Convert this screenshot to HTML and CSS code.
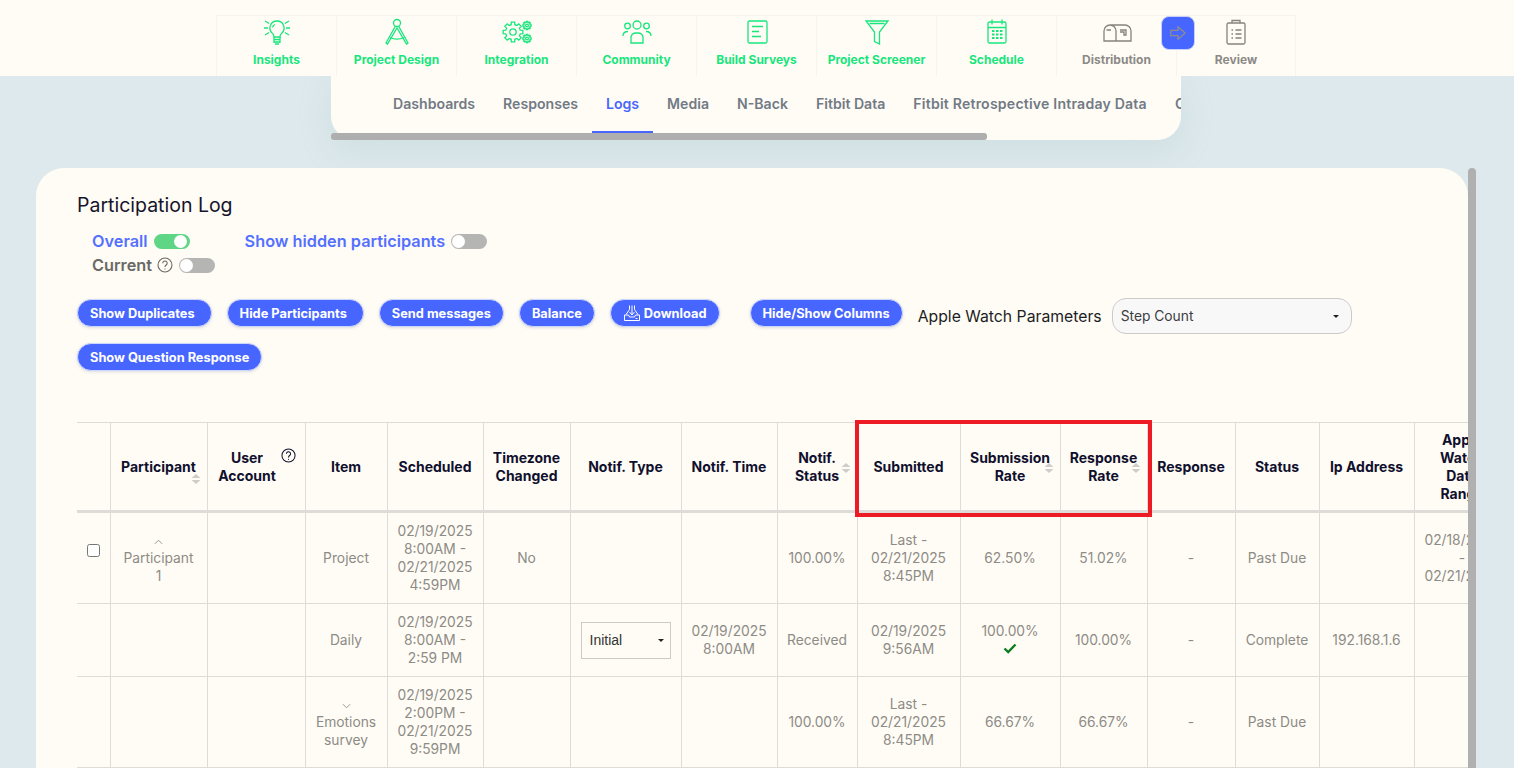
FILE: index.html
```html
<!DOCTYPE html>
<html lang="en">
<head>
<meta charset="utf-8">
<title>Participation Log</title>
<link rel="stylesheet" href="styles.css">
</head>
<body>
<header class="topbar">
  <nav class="steps">
    <a class="step done"><svg viewBox="0 0 32 32"><path d="M16 5a7 7 0 0 0-4.500 12.400c1 1 1.500 2 1.500 3.600h6c0-1.600.5-2.600 1.500-3.600A7 7 0 0 0 16 5z"/><path d="M13 23.500h6M13 26h6M14 28h4M13 21v6M19 21v6M14 8.500a4 4 0 0 0-2.500 3M3 12h4M25 12h4M4 5l4 2.500M28 5l-4 2.500M4 19l4-2.500M28 19l-4-2.500"/></svg><span>Insights</span></a>
    <a class="step done"><svg viewBox="0 0 32 32"><circle cx="16" cy="7" r="3.500"/><path d="M14.500 10 5 27l1.500 1 9.500-16 9.500 16 1.500-1-9.500-17M9 21.500c4 2 10 2 14 0"/></svg><span>Project Design</span></a>
    <a class="step done"><svg viewBox="0 0 32 32"><defs><path id="gear" d="M7.280-1.810 9.850-1.740 9.850 1.740 7.280 1.810 6.430 3.860 8.190 5.740 5.740 8.190 3.860 6.430 1.810 7.280 1.740 9.850-1.740 9.850-1.810 7.280-3.860 6.430-5.740 8.190-8.190 5.740-6.430 3.860-7.280 1.810-9.850 1.740-9.850-1.740-7.280-1.810-6.430-3.860-8.190-5.740-5.740-8.190-3.860-6.430-1.810-7.280-1.740-9.850 1.740-9.850 1.810-7.280 3.860-6.430 5.740-8.190 8.190-5.740 6.430-3.860z"/></defs><use href="#gear" transform="translate(12 16)"/><circle cx="12" cy="16" r="3.200"/><use href="#gear" class="thin" transform="translate(26 9.500) scale(.42)"/><circle cx="26" cy="9.500" r="1.400"/><use href="#gear" class="thin" transform="translate(26 22.500) scale(.42)"/><circle cx="26" cy="22.500" r="1.400"/></svg><span>Integration</span></a>
    <a class="step done"><svg viewBox="0 0 32 32"><circle cx="16" cy="9" r="4"/><circle cx="6.500" cy="10" r="2.800"/><circle cx="25.500" cy="10" r="2.800"/><path d="M10 27v-6a5 5 0 0 1 5-4h2a5 5 0 0 1 5 4v6zM2 20c0-3 2-4.500 5-4.500M30 20c0-3-2-4.500-5-4.500"/></svg><span>Community</span></a>
    <a class="step done"><svg viewBox="0 0 32 32"><rect x="7" y="5" width="19" height="22" rx="1.500"/><path d="M11 10.500h11M11 15.500h7M11 20.500h9"/></svg><span>Build Surveys</span></a>
    <a class="step done"><svg viewBox="0 0 32 32"><path d="M5 5h22L18.500 16v12l-5-2.500V16zM8.500 7.500h15"/></svg><span>Project Screener</span></a>
    <a class="step done"><svg viewBox="0 0 32 32"><rect x="7" y="6" width="18" height="21" rx="1.500"/><path d="M7 11.500h18M11 3.500v5M21 3.500v5"/><path class="dots" d="M11 15h2.500M15 15h2.500M19 15h2.500M11 18.500h2.500M15 18.500h2.500M19 18.500h2.500M11 22h2.500M15 22h2.500M19 22h2.500"/></svg><span>Schedule</span></a>
    <a class="step todo"><svg viewBox="0 0 32 32"><path d="M9 9h15a6 6 0 0 1 6 6v10H3V15a6 6 0 0 1 6-6zM9 9a6 6 0 0 1 6 6v10M5.500 14H10M19 14h6v5h-2v-3h-4"/></svg><span>Distribution</span></a>
    <a class="step todo"><svg viewBox="0 0 32 32"><rect x="7" y="7" width="18" height="21" rx="1.500"/><path d="M12 7V4.500h8V7M11.500 14h1.500M15.500 14h6M11.500 18h1.500M15.500 18h6M11.500 22h1.500M15.500 22h6"/></svg><span>Review</span></a>
    <button class="next" aria-label="Next"><svg viewBox="0 0 20 20"><path d="M2 7h8V3l8 7-8 7v-4H2z"/></svg></button>
  </nav>
</header>

<section class="tabs">
  <div class="tabs-track">
    <a class="tab">Dashboards</a>
    <a class="tab">Responses</a>
    <a class="tab active">Logs</a>
    <a class="tab">Media</a>
    <a class="tab">N-Back</a>
    <a class="tab">Fitbit Data</a>
    <a class="tab long">Fitbit Retrospective Intraday Data</a>
    <a class="tab">Custom</a>
  </div>
  <div class="tabs-scroll"></div>
</section>

<main class="card">
  <div class="card-body">
    <h1 class="title">Participation Log</h1>
    <div class="filters">
      <div class="filter-row">
        <span class="flabel blue">Overall</span><span class="switch on"></span>
        <span class="flabel blue second">Show hidden participants</span><span class="switch"></span>
      </div>
      <div class="filter-row">
        <span class="flabel grey">Current</span>
        <svg class="help grey-help" viewBox="0 0 16 16"><circle cx="8" cy="8" r="7"/><path d="M5.800 6.200a2.200 2.200 0 1 1 3.400 1.800c-.8.500-1.200 1-1.200 2"/><path d="M8 11.600v1"/></svg>
        <span class="switch"></span>
      </div>
    </div>

    <div class="toolbar">
      <button class="btn roomy">Show Duplicates</button>
      <button class="btn roomy">Hide Participants</button>
      <button class="btn">Send messages</button>
      <button class="btn">Balance</button>
      <button class="btn"><svg class="dl" viewBox="0 0 18 18"><path d="M9 1.500v9M6.500 8 9 11l2.500-3M6.500 1.500v4L3 10.500M11.500 1.500v4l3.500 5M1.500 11h4l1 2h5l1-2h4v5.500h-15zM12.500 14.500h2"/></svg>Download</button>
      <button class="btn push">Hide/Show Columns</button>
      <label class="param">Apple Watch Parameters
        <span class="param-select"><select><option>Step Count</option></select></span>
      </label>
      <button class="btn">Show Question Response</button>
    </div>

    <div class="table-wrap">
      <table class="log">
        <colgroup>
          <col class="c33"><col class="c97"><col class="c98"><col class="c82"><col class="c96"><col class="c87"><col class="c111"><col class="c96"><col class="c80"><col class="c103"><col class="c100"><col class="c87"><col class="c88"><col class="c84"><col class="c95"><col class="c96">
        </colgroup>
        <thead>
          <tr>
            <th></th>
            <th>Participant<i class="sort low"></i></th>
            <th class="has-help">User Account<svg class="help head-help" viewBox="0 0 16 16"><circle cx="8" cy="8" r="7"/><path d="M5.800 6.200a2.200 2.200 0 1 1 3.400 1.800c-.8.500-1.200 1-1.200 2"/><path d="M8 11.600v1"/></svg></th>
            <th>Item</th>
            <th>Scheduled</th>
            <th>Timezone Changed</th>
            <th>Notif. Type</th>
            <th>Notif. Time</th>
            <th>Notif. Status<i class="sort"></i></th>
            <th>Submitted</th>
            <th>Submission Rate<i class="sort"></i></th>
            <th>Response Rate<i class="sort"></i></th>
            <th>Response</th>
            <th>Status</th>
            <th>Ip Address</th>
            <th>Apple<br>Watch<br>Data<br>Range</th>
          </tr>
        </thead>
        <tbody>
          <tr>
            <td><input type="checkbox" class="check"></td>
            <td><svg class="chev" viewBox="0 0 10 6"><path d="M1 5l4-4 4 4"/></svg><br>Participant<br>1</td>
            <td></td>
            <td>Project</td>
            <td>02/19/2025 8:00AM - 02/21/2025 4:59PM</td>
            <td>No</td>
            <td></td>
            <td></td>
            <td>100.00%</td>
            <td>Last -<br>02/21/2025 8:45PM</td>
            <td>62.50%</td>
            <td>51.02%</td>
            <td>-</td>
            <td>Past Due</td>
            <td></td>
            <td>02/18/2025<br>-<br>02/21/2025</td>
          </tr>
          <tr>
            <td></td><td></td><td></td>
            <td>Daily</td>
            <td>02/19/2025 8:00AM - 2:59 PM</td>
            <td></td>
            <td><span class="cell-select"><select><option>Initial</option></select></span></td>
            <td>02/19/2025 8:00AM</td>
            <td>Received</td>
            <td>02/19/2025 9:56AM</td>
            <td>100.00%<br><svg class="tick" viewBox="0 0 14 11"><path d="M1.500 5.500 5.200 9 12.500 1.500"/></svg></td>
            <td>100.00%</td>
            <td>-</td>
            <td>Complete</td>
            <td>192.168.1.6</td>
            <td></td>
          </tr>
          <tr>
            <td></td><td></td><td></td>
            <td><svg class="chev" viewBox="0 0 10 6"><path d="M1 1l4 4 4-4"/></svg><br>Emotions survey</td>
            <td>02/19/2025 2:00PM - 02/21/2025 9:59PM</td>
            <td></td><td></td><td></td>
            <td>100.00%</td>
            <td>Last -<br>02/21/2025 8:45PM</td>
            <td>66.67%</td>
            <td>66.67%</td>
            <td>-</td>
            <td>Past Due</td>
            <td></td><td></td>
          </tr>
        </tbody>
      </table>
      <div class="highlight"></div>
    </div>
  </div>
  <div class="card-scroll"></div>
</main>
</body>
</html>
```
FILE: styles.css
```css
* { box-sizing: border-box; }
html, body { height: 100%; }
body {
  margin: 0;
  height: 768px;
  overflow: hidden;
  background: #dde9ec;
  font-family: "Inter", "Liberation Sans", sans-serif;
  color: #8d8b86;
}

/* top step bar */
.topbar {
  height: 76px;
  padding-top: 15px;
  background: #fffcf5;
  display: flex;
  justify-content: center;
  position: relative;
  z-index: 2;
}
.steps { display: flex; position: relative; margin-left: -2px; }
.step {
  width: 120px;
  height: 61px;
  border-left: 1px solid #f6f4ee;
  border-top: 1px solid #f6f4ee;
  display: flex;
  flex-direction: column;
  align-items: center;
  font-size: 12px;
  font-weight: 700;
  line-height: 14px;
}
.step:nth-child(9) { border-right: 1px solid #f6f4ee; }
.step svg { width: 32px; height: 32px; margin-bottom: 5px; fill: none; stroke-width: 1.300; }
.step.done { color: #17e67c; }
.step.done svg { stroke: #17e67c; }
.step.todo { color: #8c8a87; }
.step.todo svg { stroke: #85837f; }
.step .dots { stroke-width: 2; }
.step .thin { stroke-width: 3; }
.next {
  position: absolute;
  left: 945px;
  top: 1px;
  width: 34px;
  height: 34px;
  padding: 7px;
  border: 1px solid #c8d2f8;
  border-radius: 8px;
  background: #4766ff;
}
.next svg { display: block; width: 18px; height: 18px; fill: none; stroke: #948f86; stroke-width: 1.300; }

/* secondary tabs */
.tabs {
  position: relative;
  width: 850px;
  height: 64px;
  margin-left: 331px;
  border-radius: 0 0 24px 24px;
  box-shadow: 0 12px 30px rgba(170, 195, 200, .25);
}
.tabs-track {
  display: flex;
  height: 64px;
  padding-left: 48px;
  overflow: hidden;
  white-space: nowrap;
  background: #fffcf5;
  border-radius: 0 0 24px 24px;
}
.tab {
  flex: none;
  padding: 0 14px;
  height: 57px;
  line-height: 56px;
  font-size: 14.100px;
  font-weight: 600;
  color: #727a85;
}
.tab.long { letter-spacing: .2px; }
.tab.active { color: #4766ff; border-bottom: 2px solid #4766ff; }
.tabs-scroll {
  position: absolute;
  left: 0;
  bottom: 0;
  width: 656px;
  height: 7px;
  background: #aeaeae;
  border-radius: 3px;
}

/* card */
.card {
  position: relative;
  width: 1440px;
  height: 620px;
  margin: 28px 0 0 36px;
}
.card-body {
  width: 1432px;
  height: 620px;
  padding: 26px 0 0 41px;
  background: #fffcf5;
  border-radius: 28px 28px 0 0;
  overflow: hidden;
}
.card-scroll {
  position: absolute;
  right: 0;
  top: 0;
  bottom: 0;
  width: 8px;
  background: #b0b0b0;
  border-radius: 4px 4px 0 0;
}
.title { margin: 0; font-size: 19.500px; line-height: 22px; font-weight: 400; color: #14142b; }

.filters { margin: 13px 0 0 15px; }
.filter-row { display: flex; align-items: center; height: 24px; font-size: 16.300px; font-weight: 600; }
.flabel.blue { color: #5470ff; }
.flabel.grey { color: #6b6966; }
.flabel.second { margin-left: 55px; }
.switch {
  position: relative;
  width: 36px;
  height: 15px;
  margin-left: 6px;
  border-radius: 8px;
  background: #b5b5b3;
}
.switch::after {
  content: "";
  position: absolute;
  left: 1px;
  top: 1px;
  width: 13px;
  height: 13px;
  border-radius: 50%;
  background: #fff;
}
.switch.on { background: #5fd685; }
.switch.on::after { left: 20px; }
.help { fill: none; stroke-width: 1.100; }
.grey-help { width: 16px; height: 16px; margin-left: 5px; stroke: #6b6966; }
.grey-help + .switch { margin-left: 6px; }

.toolbar {
  display: flex;
  flex-wrap: wrap;
  align-items: flex-start;
  gap: 8px 15px;
  width: 1391px;
  margin-top: 21px;
}
.btn {
  height: 28px;
  margin-top: 1px;
  padding: 0 12px;
  border: 1px solid #cdd6fb;
  border-radius: 14px;
  background: #4766ff;
  color: #fff;
  font: 700 12.800px "Inter", "Liberation Sans", sans-serif;
  display: flex;
  align-items: center;
  box-shadow: 0 1px 3px rgba(120, 130, 170, .25);
}
.btn.roomy { padding-right: 16px; }
.btn.push { margin-left: 15px; }
.dl { width: 18px; height: 18px; margin-right: 3px; fill: none; stroke: #fff; stroke-width: 1; }
.param { display: flex; align-items: center; gap: 10px; height: 36px; font-size: 15.750px; color: #1d1d24; }
.param-select, .cell-select { position: relative; display: block; }
.param-select::after, .cell-select::after {
  content: "";
  position: absolute;
  right: 13px;
  top: 50%;
  margin-top: -1px;
  border: 3px solid transparent;
  border-top: 3px solid #222;
  border-bottom: 0;
  pointer-events: none;
}
.param-select select {
  display: block;
  width: 240px;
  height: 36px;
  padding: 0 8px;
  border: 1px solid #cccbc8;
  border-radius: 14px;
  background: #f8f8f8;
  appearance: none;
  color: #3c3c42;
  font: 13.800px "Inter", sans-serif;
}

/* table */
.table-wrap {
  position: relative;
  width: 1391px;
  height: 362px;
  margin-top: 49px;
  padding-top: 2px;
  overflow: hidden;
}
.log {
  table-layout: fixed;
  width: 1433px;
  border-collapse: collapse;
  font-size: 13.800px;
  line-height: 18px;
  text-align: center;
}
.c33 { width: 33px; } .c97 { width: 97px; } .c98 { width: 98px; } .c82 { width: 82px; }
.c96 { width: 96px; } .c87 { width: 87px; } .c111 { width: 111px; } .c80 { width: 80px; }
.c103 { width: 103px; } .c100 { width: 100px; } .c88 { width: 88px; } .c84 { width: 84px; } .c95 { width: 95px; }
.log th, .log td {
  border: 1px solid #dddcd9;
  padding: 9px 8px;
  vertical-align: middle;
}
.log th:first-child, .log td:first-child { border-left: 0; }
.log th {
  position: relative;
  height: 89px;
  padding: 7px 8px;
  border-bottom: 3px solid #dddcd9;
  color: #10102e;
  font-size: 14px;
  font-weight: 700;
}
.log th.has-help { padding-right: 26px; }
.log td { font-weight: 400; }
.log tbody tr:nth-child(1) td { height: 91px; }
.log tbody tr:nth-child(2) td { height: 73px; }
.log tbody tr:nth-child(3) td { height: 91px; }
.sort {
  position: absolute;
  right: 6px;
  top: 40px;
  width: 9px;
  height: 10px;
}
.sort::before, .sort::after {
  content: "";
  position: absolute;
  left: 0;
  width: 9px;
  height: 4px;
  background: #cfcdc9;
}
.sort::before { top: 0; clip-path: polygon(50% 0, 100% 100%, 0 100%); }
.sort::after { top: 6px; clip-path: polygon(0 0, 100% 0, 50% 100%); }
.sort.low { top: 51px; right: 6px; }
.head-help { position: absolute; right: 9px; top: 25px; width: 15px; height: 15px; stroke: #10102e; }
.check { margin: 0; width: 13px; height: 13px; display: block; transform: translate(2px, -8px); }
.chev { width: 9px; height: 6px; fill: none; stroke: #8d8b86; stroke-width: 1; }
.tick { width: 14px; height: 11px; fill: none; stroke: #0b7d20; stroke-width: 2.400; }
.cell-select select {
  display: block;
  width: 90px;
  height: 37px;
  padding: 0 8px;
  border: 1px solid #cccbc8;
  border-radius: 0;
  background: #fffcf5;
  appearance: none;
  color: #333;
  font: 14px "Liberation Sans", sans-serif;
}
.cell-select { margin-left: 2px; }
.cell-select::after { right: 9px; }
.highlight {
  position: absolute;
  left: 778px;
  top: 0;
  width: 297px;
  height: 97px;
  border: 4px solid #ed1c24;
  pointer-events: none;
}
```
